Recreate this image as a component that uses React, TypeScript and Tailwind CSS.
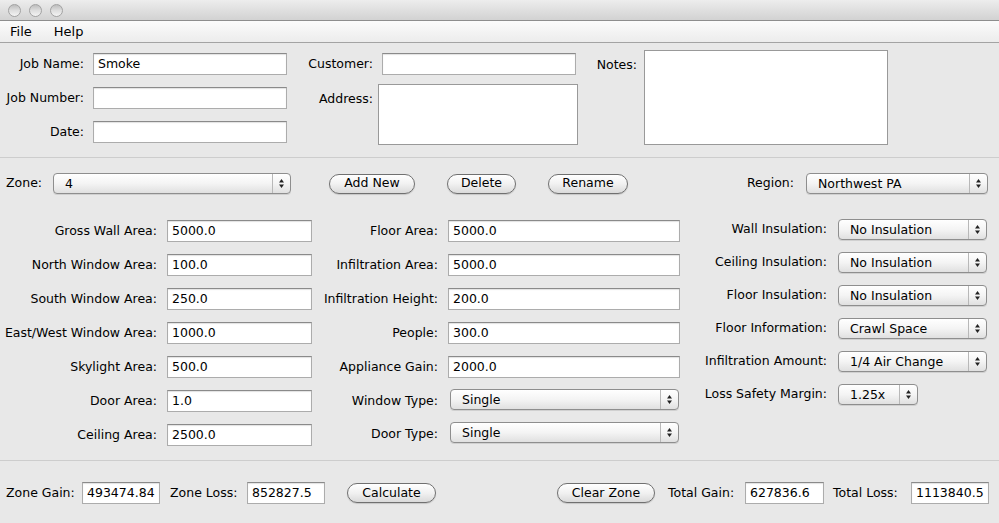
import React from "react";

const Arrows = () => (
  <svg width="7" height="11" viewBox="0 0 7 11">
    <path d="M3.5 1 L6 4.5 L1 4.5 Z" fill="#222" />
    <path d="M3.5 10 L6 6.5 L1 6.5 Z" fill="#222" />
  </svg>
);

const TextField = ({ className, value }: { className: string; value?: string }) => (
  <div
    className={`h-[22px] shrink-0 border border-[#acacac] border-t-[#8a8a8a] bg-white pl-[4px] leading-[20px] shadow-[inset_0_1px_1px_rgba(0,0,0,0.12)] ${className}`}
  >
    {value}
  </div>
);

const Combo = ({ className, value }: { className: string; value: string }) => (
  <div
    className={`flex h-[21px] shrink-0 items-stretch rounded-[4px] border border-[#8e8e8e] bg-gradient-to-b from-white via-[#f4f4f4] to-[#e0e0e0] shadow-[0_1px_0_rgba(0,0,0,0.1)] ${className}`}
  >
    <div className="flex-1 pl-[11px] leading-[19px]">{value}</div>
    <div className="flex w-[18px] items-center justify-center border-l border-[#b8b8b8]">
      <Arrows />
    </div>
  </div>
);

const Button = ({ className, label }: { className: string; label: string }) => (
  <div
    className={`flex h-[20px] shrink-0 items-center justify-center rounded-full border border-[#707070] bg-gradient-to-b from-white via-[#f1f1f1] to-[#dadada] shadow-[0_1px_1px_rgba(0,0,0,0.15)] ${className}`}
  >
    {label}
  </div>
);

const Row = ({ labelW, label, children }: { labelW: string; label: string; children: React.ReactNode }) => (
  <div className="flex h-[22px] items-center">
    <div className={`shrink-0 text-right ${labelW}`}>{label}</div>
    {children}
  </div>
);

const left = [
  ["Gross Wall Area:", "5000.0"],
  ["North Window Area:", "100.0"],
  ["South Window Area:", "250.0"],
  ["East/West Window Area:", "1000.0"],
  ["Skylight Area:", "500.0"],
  ["Door Area:", "1.0"],
  ["Ceiling Area:", "2500.0"],
];

const middle = [
  ["Floor Area:", "5000.0"],
  ["Infiltration Area:", "5000.0"],
  ["Infiltration Height:", "200.0"],
  ["People:", "300.0"],
  ["Appliance Gain:", "2000.0"],
];

const right = [
  ["Wall Insulation:", "No Insulation"],
  ["Ceiling Insulation:", "No Insulation"],
  ["Floor Insulation:", "No Insulation"],
  ["Floor Information:", "Crawl Space"],
  ["Infiltration Amount:", "1/4 Air Change"],
];

export default function App() {
  return (
    <div className="flex h-[523px] w-[999px] flex-col overflow-hidden whitespace-nowrap bg-[#e8e8e8] font-['Lucida_Grande','DejaVu_Sans',sans-serif] text-[12.5px] text-black">
      {/* title bar */}
      <div className="flex h-[21px] items-center gap-[8px] border-b border-[#8d8d8d] bg-gradient-to-b from-[#ededed] to-[#d2d2d2] pl-[8px]">
        {[0, 1, 2].map((i) => (
          <div
            key={i}
            className="h-[13px] w-[13px] rounded-full border border-[#a2a2a2] bg-gradient-to-b from-[#bdbdbd] via-[#dedede] to-[#f4f4f4]"
          />
        ))}
      </div>

      {/* menu bar */}
      <div className="flex h-[22px] items-center gap-[22px] border-b border-[#a3a3a3] bg-gradient-to-b from-[#fbfbfb] to-[#ececec] pl-[10px] text-[13px]">
        <span>File</span>
        <span>Help</span>
      </div>

      {/* job info */}
      <div className="flex h-[114px] pt-[7px]">
        <div className="mt-[3px] flex flex-col gap-[12px]">
          <Row labelW="w-[84px]" label="Job Name:">
            <TextField className="ml-[9px] w-[194px]" value="Smoke" />
          </Row>
          <Row labelW="w-[84px]" label="Job Number:">
            <TextField className="ml-[9px] w-[194px]" />
          </Row>
          <Row labelW="w-[84px]" label="Date:">
            <TextField className="ml-[9px] w-[194px]" />
          </Row>
        </div>
        <div className="mt-[3px] flex flex-col gap-[9px]">
          <Row labelW="w-[86px]" label="Customer:">
            <TextField className="ml-[9px] w-[194px]" />
          </Row>
          <div className="flex">
            <div className="w-[86px] pt-[6px] text-right">Address:</div>
            <div className="ml-[5px] h-[61px] w-[200px] border border-[#999] bg-white" />
          </div>
        </div>
        <div className="flex">
          <div className="w-[59px] pt-[6px] text-right">Notes:</div>
          <div className="ml-[7px] h-[95px] w-[244px] border border-[#999] bg-white" />
        </div>
      </div>

      <div className="h-px bg-[#cdcdcd]" />

      {/* zone row */}
      <div className="mt-[15px] flex h-[21px] items-center pl-[6px]">
        <div className="w-[47px] shrink-0">Zone:</div>
        <Combo className="w-[238px]" value="4" />
        <Button className="ml-[38px] w-[86px]" label="Add New" />
        <Button className="ml-[32px] w-[69px]" label="Delete" />
        <Button className="ml-[32px] w-[80px]" label="Rename" />
        <div className="ml-[119px] w-[59px] shrink-0">Region:</div>
        <Combo className="w-[182px]" value="Northwest PA" />
      </div>

      {/* zone fields */}
      <div className="mt-[26px] flex">
        <div className="flex w-[312px] flex-col gap-[12px]">
          {left.map(([l, v]) => (
            <Row key={l} labelW="w-[157px]" label={l}>
              <TextField className="ml-[10px] w-[145px]" value={v} />
            </Row>
          ))}
        </div>
        <div className="flex w-[368px] flex-col gap-[12px]">
          {middle.map(([l, v]) => (
            <Row key={l} labelW="w-[126px]" label={l}>
              <TextField className="ml-[10px] w-[232px]" value={v} />
            </Row>
          ))}
          <div className="flex h-[22px] items-start">
            <div className="w-[126px] shrink-0 pt-[2px] text-right">Window Type:</div>
            <Combo className="-mt-[1px] ml-[12px] w-[229px]" value="Single" />
          </div>
          <div className="flex h-[22px] items-start">
            <div className="w-[126px] shrink-0 pt-[1px] text-right">Door Type:</div>
            <Combo className="-mt-[2px] ml-[12px] w-[229px]" value="Single" />
          </div>
        </div>
        <div className="-mt-[1px] flex flex-col gap-[12px]">
          {right.map(([l, v]) => (
            <div key={l} className="flex h-[21px] items-center">
              <div className="w-[147px] shrink-0 text-right">{l}</div>
              <Combo className="ml-[11px] w-[149px]" value={v} />
            </div>
          ))}
          <div className="flex h-[21px] items-center">
            <div className="w-[147px] shrink-0 text-right">Loss Safety Margin:</div>
            <Combo className="ml-[11px] w-[80px]" value="1.25x" />
          </div>
        </div>
      </div>

      <div className="mt-[14px] h-px bg-[#cdcdcd]" />

      {/* totals */}
      <div className="mt-[21px] flex h-[22px] items-center pl-[6px]">
        <div className="w-[66px] shrink-0">Zone Gain:</div>
        <TextField className="ml-[10px] w-[78px]" value="493474.84" />
        <div className="ml-[10px] w-[77px] shrink-0">Zone Loss:</div>
        <TextField className="w-[78px]" value="852827.5" />
        <Button className="ml-[22px] w-[89px]" label="Calculate" />
        <Button className="ml-[121px] w-[98px]" label="Clear Zone" />
        <div className="ml-[13px] w-[77px] shrink-0">Total Gain:</div>
        <TextField className="w-[79px]" value="627836.6" />
        <div className="ml-[9px] w-[78px] shrink-0">Total Loss:</div>
        <TextField className="w-[78px]" value="1113840.5" />
      </div>
    </div>
  );
}
